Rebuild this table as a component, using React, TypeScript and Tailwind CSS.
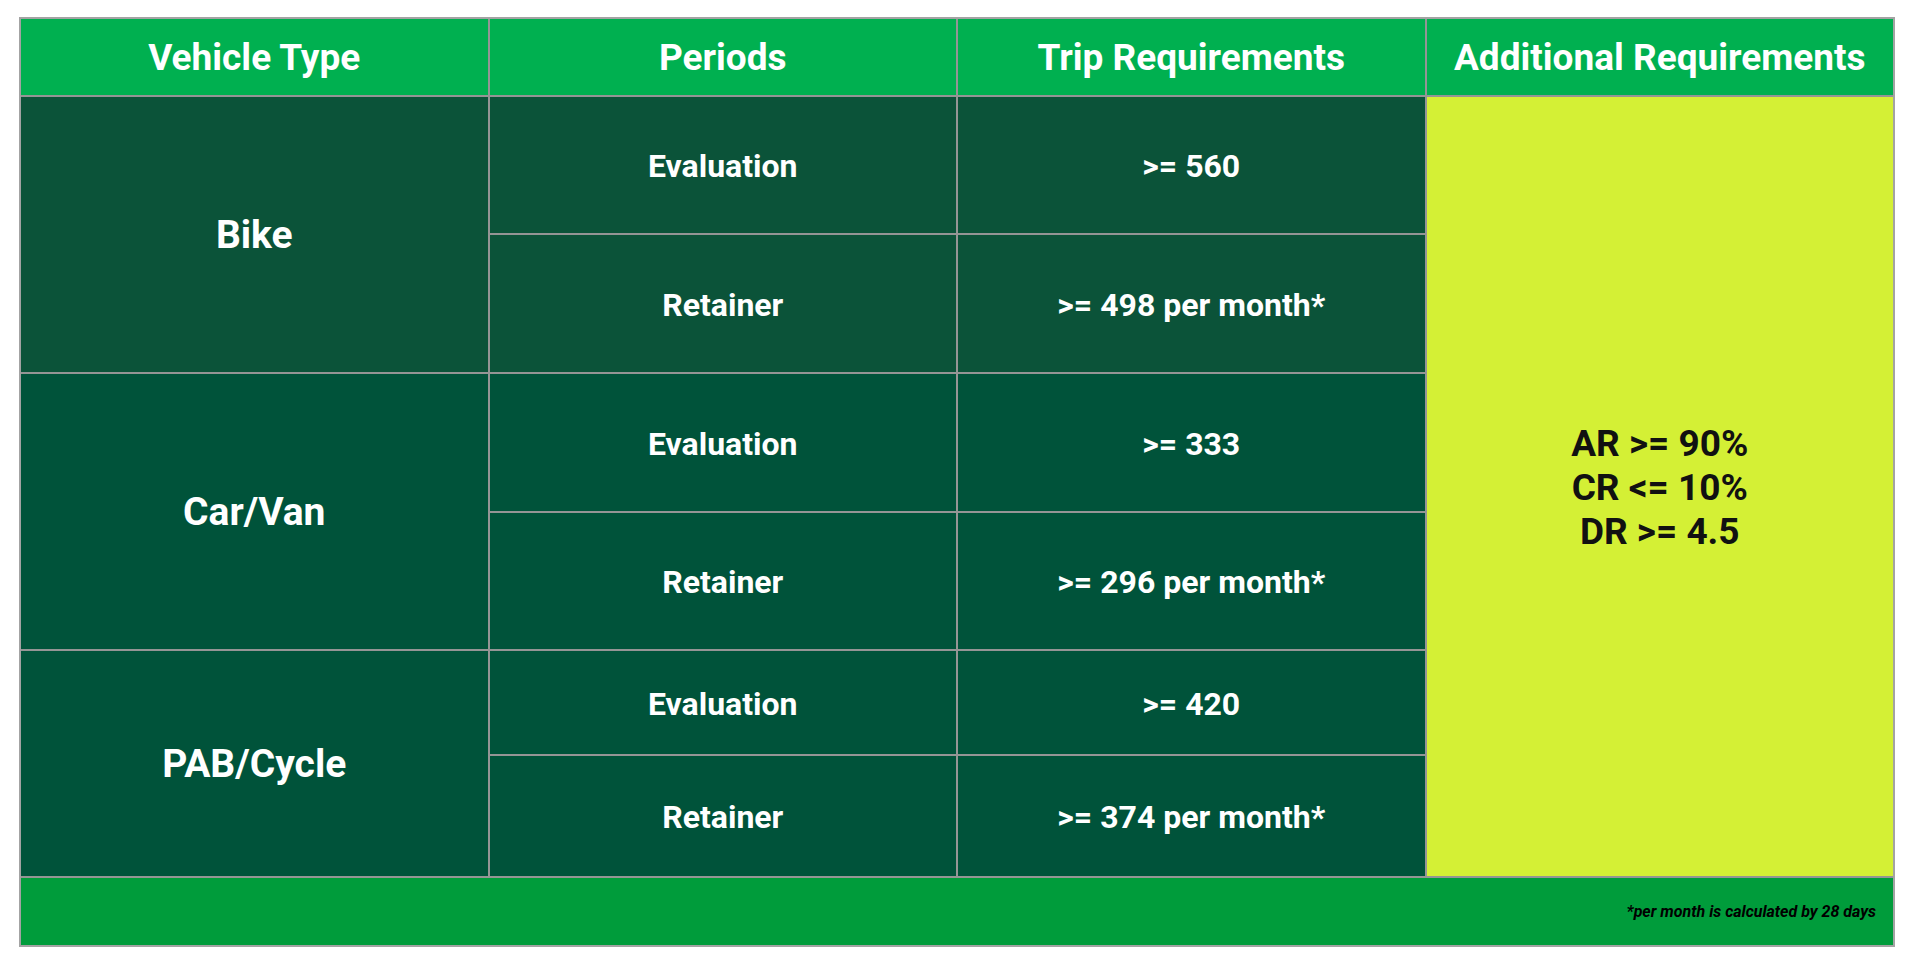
const headers = ["Vehicle Type", "Periods", "Trip Requirements", "Additional Requirements"];

const vehicles = [
  {
    name: "Bike",
    bg: "bg-[#0b5339]",
    rows: [
      { period: "Evaluation", req: ">= 560" },
      { period: "Retainer", req: ">= 498 per month*" },
    ],
  },
  {
    name: "Car/Van",
    bg: "bg-[#00533a]",
    rows: [
      { period: "Evaluation", req: ">= 333" },
      { period: "Retainer", req: ">= 296 per month*" },
    ],
  },
  {
    name: "PAB/Cycle",
    bg: "bg-[#00533a]",
    rows: [
      { period: "Evaluation", req: ">= 420" },
      { period: "Retainer", req: ">= 374 per month*" },
    ],
  },
];

const rowStarts = ["row-start-2", "row-start-4", "row-start-6"];
const subRowStarts = ["row-start-2", "row-start-3", "row-start-4", "row-start-5", "row-start-6", "row-start-7"];

export default function App() {
  return (
    <div className="min-h-screen bg-white pl-[19px] pt-[17px] font-['Roboto',_'Liberation_Sans',_sans-serif]">
      <div className="grid w-[1876px] grid-cols-4 grid-rows-[76px_136px_137px_137px_136px_103px_120px_67px] gap-[2px] border-2 border-[#a3a3a3] bg-[#959595]">
        {/* header */}
        {headers.map((h) => (
          <div key={h} className="row-start-1 flex items-center justify-center bg-[#00b050] pt-[2px] text-[37px] font-bold text-white">
            {h}
          </div>
        ))}

        {/* vehicle type cells */}
        {vehicles.map((v, i) => (
          <div
            key={v.name}
            className={`col-start-1 ${rowStarts[i]} row-span-2 flex items-center justify-center ${v.bg} pt-[2px] text-[39px] font-bold text-white`}
          >
            {v.name}
          </div>
        ))}

        {vehicles.flatMap((v, i) =>
          v.rows.map((r, j) => (
            <div key={`${v.name}-${r.period}`} className="contents">
              <div
                className={`col-start-2 ${subRowStarts[i * 2 + j]} flex items-center justify-center ${v.bg} pt-[2px] text-[32px] font-bold text-white`}
              >
                {r.period}
              </div>
              <div
                className={`col-start-3 ${subRowStarts[i * 2 + j]} flex items-center justify-center ${v.bg} pt-[2px] text-[32px] font-bold text-white`}
              >
                {r.req}
              </div>
            </div>
          ))
        )}

        {/* additional requirements */}
        <div className="col-start-4 row-start-2 row-span-6 flex flex-col items-center justify-center bg-[#d4f035] pt-[2px] text-[37px] font-bold leading-[44px] text-[#111]">
          <span>AR &gt;= 90%</span>
          <span>CR &lt;= 10%</span>
          <span>DR &gt;= 4.5</span>
        </div>

        {/* footer */}
        <div className="col-span-4 row-start-8 flex items-center justify-end bg-[#009c3b] pr-[17px] text-[16px] font-bold italic text-black">
          *per month is calculated by 28 days
        </div>
      </div>
    </div>
  );
}
